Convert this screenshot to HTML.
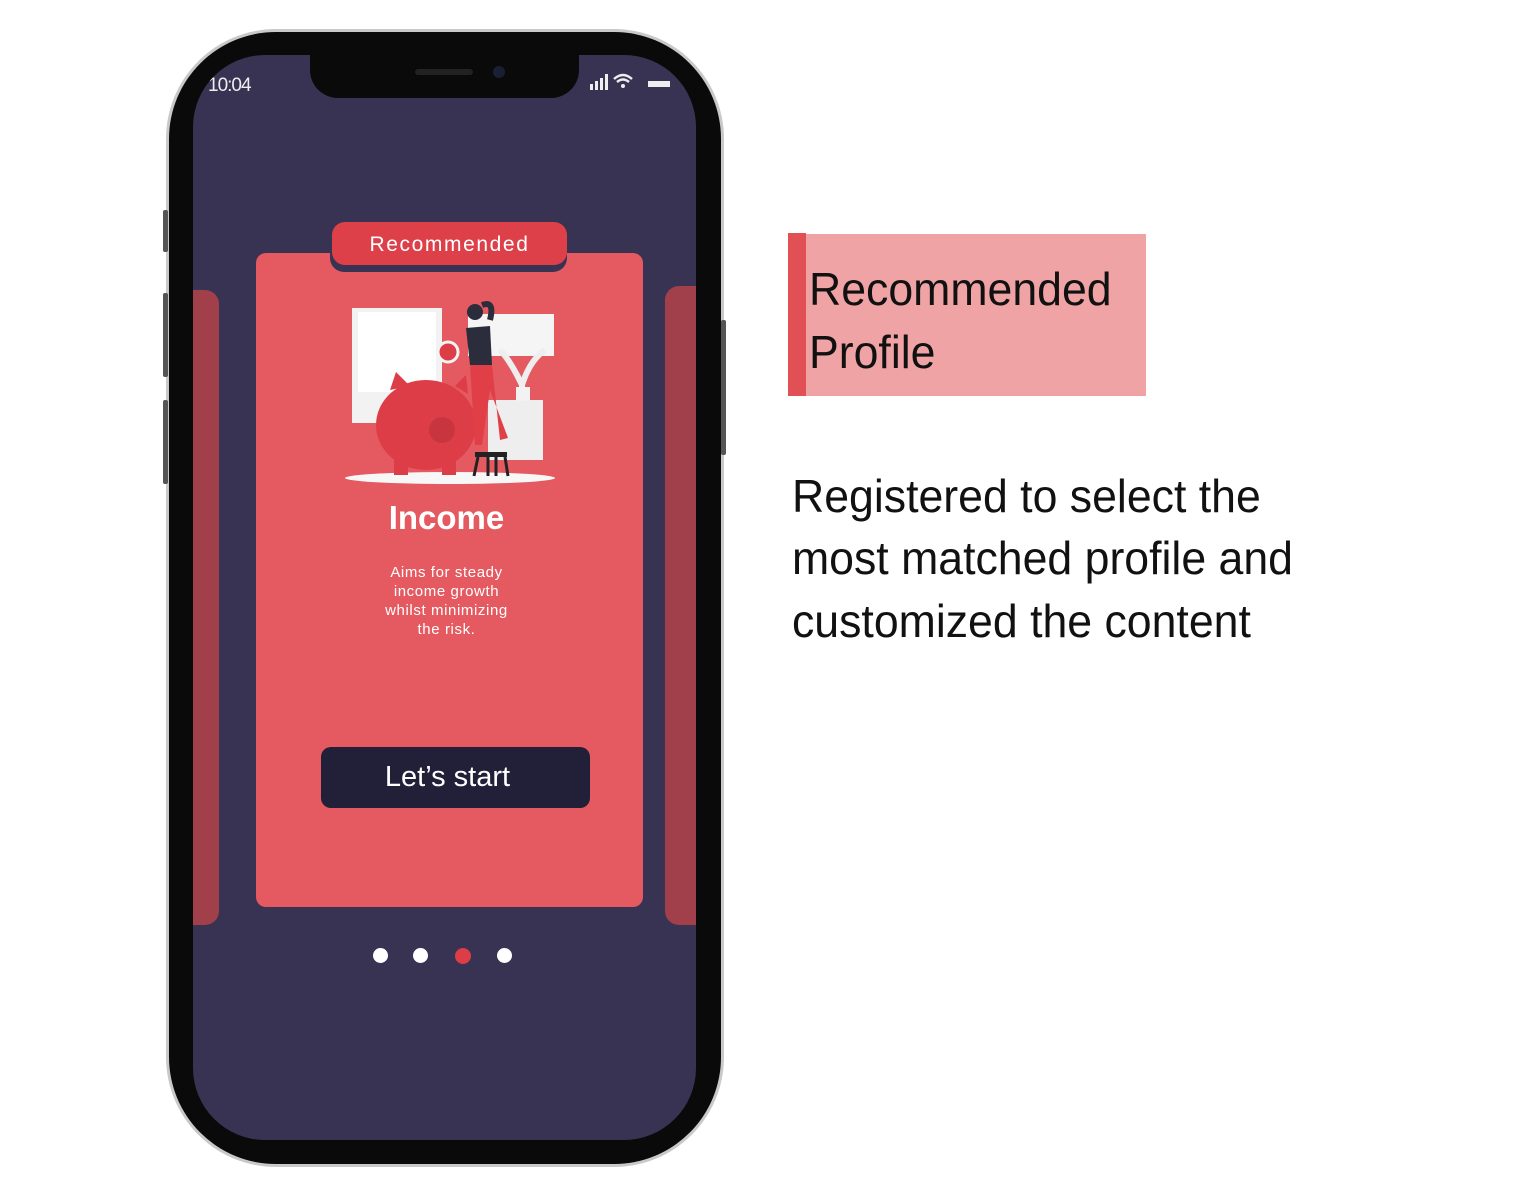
<!DOCTYPE html>
<html><head><meta charset="utf-8"><style>
*{margin:0;padding:0;box-sizing:border-box}
body{width:1536px;height:1195px;background:#fff;position:relative;overflow:hidden;font-family:"Liberation Sans",sans-serif}
.a{position:absolute}
.line{position:absolute;white-space:nowrap;transform-origin:left top;transform:scaleX(0.97);color:#111;font-size:46px}
</style></head><body>
<!-- phone frame -->
<div class="a" style="left:166px;top:29px;width:558px;height:1138px;border-radius:110px;background:#c9c9c9"></div>
<div class="a" style="left:169px;top:32px;width:552px;height:1132px;border-radius:107px;background:#0a0a0a"></div>
<div class="a" style="left:163px;top:210px;width:5px;height:42px;background:#555;border-radius:2px"></div>
<div class="a" style="left:163px;top:293px;width:5px;height:84px;background:#555;border-radius:2px"></div>
<div class="a" style="left:163px;top:400px;width:5px;height:84px;background:#555;border-radius:2px"></div>
<div class="a" style="left:721px;top:320px;width:5px;height:135px;background:#555;border-radius:2px"></div>
<!-- screen -->
<div class="a" style="left:193px;top:55px;width:503px;height:1085px;border-radius:72px;background:#383353;overflow:hidden">
  <div class="a" style="left:117px;top:-10px;width:269px;height:53px;background:#0a0a0a;border-radius:0 0 28px 28px"></div>
  <div class="a" style="left:222px;top:14px;width:58px;height:6px;background:#222;border-radius:3px"></div>
  <div class="a" style="left:300px;top:11px;width:12px;height:12px;background:#1a1f33;border-radius:50%"></div>
  <div class="a" style="left:15px;top:20px;color:#eee;font-size:19px;letter-spacing:-1px">10:04</div>
  <svg class="a" style="left:395px;top:16px" width="90" height="22" viewBox="0 0 90 22">
    <rect x="2" y="13" width="3" height="6" fill="#eee"/><rect x="7" y="10" width="3" height="9" fill="#eee"/><rect x="12" y="7" width="3" height="12" fill="#eee"/><rect x="17" y="3" width="3" height="16" fill="#eee"/>
    <path d="M26 8 Q35 0 44 8" stroke="#eee" stroke-width="2.5" fill="none"/><path d="M29 11 Q35 6 41 11" stroke="#eee" stroke-width="2.5" fill="none"/><circle cx="35" cy="15" r="2" fill="#eee"/>
    <rect x="60" y="10" width="22" height="6" fill="#eee"/>
  </svg>
  <div class="a" style="left:0;top:235px;width:26px;height:635px;background:#a1404a;border-radius:0 14px 14px 0"></div>
  <div class="a" style="left:472px;top:231px;width:40px;height:639px;background:#a1404a;border-radius:14px 0 0 14px"></div>
  <!-- card -->
  <div class="a" style="left:63px;top:198px;width:387px;height:654px;background:#e45a60;border-radius:10px"></div>
  <div class="a" style="left:137px;top:172px;width:237px;height:45px;background:#383353;border-radius:14px"></div>
  <div class="a" style="left:139px;top:167px;width:235px;height:43px;background:#dd4048;border-radius:13px;color:#fff;font-size:21px;text-align:center;line-height:45px;letter-spacing:1.6px">Recommended</div>
  <!-- illustration -->
  <svg class="a" style="left:137px;top:235px" width="240" height="200" viewBox="0 0 240 200">
    <rect x="22" y="18" width="90" height="115" fill="#f2f2f2"/>
    <rect x="28" y="22" width="78" height="80" fill="#fff"/>
    <rect x="138" y="24" width="86" height="42" fill="#f5f5f5"/>
    <rect x="158" y="110" width="55" height="60" fill="#eee"/>
    <path d="M192 95 Q180 70 170 60 M192 95 Q200 70 215 60 M192 95 L192 108" stroke="#eee" stroke-width="6" fill="none"/>
    <rect x="186" y="97" width="14" height="14" fill="#f2f2f2"/>
    <ellipse cx="120" cy="188" rx="105" ry="6" fill="#f7f7f7"/>
    <ellipse cx="96" cy="135" rx="50" ry="45" fill="#dd3d46"/>
    <path d="M60 100 L66 82 L80 96Z M125 96 L136 85 L138 104Z" fill="#dd3d46"/>
    <circle cx="112" cy="140" r="13" fill="#c8353e"/>
    <rect x="64" y="165" width="14" height="20" fill="#dd3d46"/><rect x="112" y="165" width="14" height="20" fill="#dd3d46"/>
    <circle cx="118" cy="62" r="10" fill="#dd3d46" stroke="#f3f3f3" stroke-width="3"/>
    <circle cx="145" cy="22" r="8" fill="#2b2d3c"/><path d="M152 15 Q165 10 160 30" stroke="#2b2d3c" stroke-width="6" fill="none"/>
    <path d="M136 38 L160 36 L162 75 L140 75Z" fill="#2b2d3c"/>
    <path d="M140 75 L162 75 L170 150 L178 148 L160 100 L152 155 L145 155Z" fill="#e03f48"/>
    <rect x="145" y="162" width="32" height="5" fill="#222"/><path d="M148 167 L144 186 M175 167 L178 186 M158 167 L158 186 M166 167 L166 186" stroke="#222" stroke-width="3"/>
  </svg>
  <div class="a" style="left:57px;top:444px;width:393px;text-align:center;color:#fff;font-weight:bold;font-size:33px">Income</div>
  <div class="a" style="left:57px;top:508px;width:393px;text-align:center;color:#fff;font-size:15px;line-height:19px;letter-spacing:0.6px">Aims for steady<br>income growth<br>whilst minimizing<br>the risk.</div>
  <div class="a" style="left:128px;top:692px;width:269px;height:61px;background:#221f38;border-radius:10px;color:#fff;font-size:29px;text-align:center;line-height:60px;padding-right:16px">Let’s start</div>
  <div class="a" style="left:180px;top:893px;width:15px;height:15px;border-radius:50%;background:#fff"></div>
  <div class="a" style="left:220px;top:893px;width:15px;height:15px;border-radius:50%;background:#fff"></div>
  <div class="a" style="left:262px;top:893px;width:16px;height:16px;border-radius:50%;background:#dd3d46"></div>
  <div class="a" style="left:304px;top:893px;width:15px;height:15px;border-radius:50%;background:#fff"></div>
</div>
<!-- right side -->
<div class="a" style="left:788px;top:234px;width:358px;height:162px;background:#f0a3a4"></div>
<div class="a" style="left:788px;top:233px;width:18px;height:163px;background:#e05055"></div>
<div class="line" style="left:809px;top:262px">Recommended</div>
<div class="line" style="left:809px;top:325px">Profile</div>
<div class="line" style="left:792px;top:469px">Registered to select the</div>
<div class="line" style="left:792px;top:531px">most matched profile and</div>
<div class="line" style="left:792px;top:594px">customized the content</div>
</body></html>
